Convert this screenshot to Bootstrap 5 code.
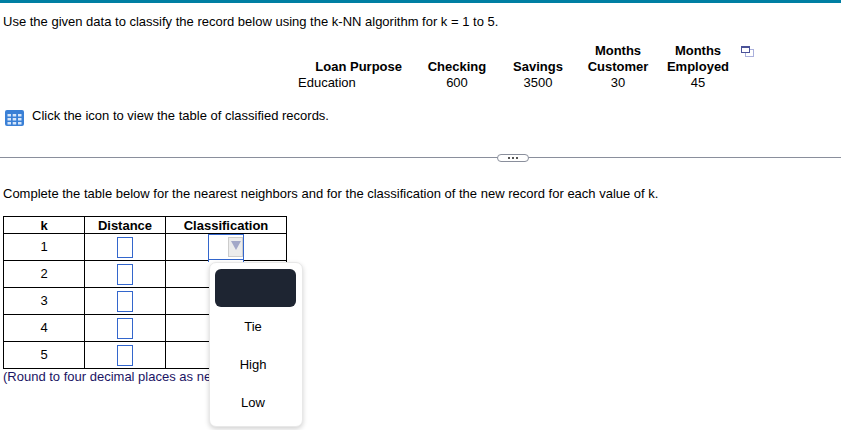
<!DOCTYPE html>
<html lang="en">
<head>
<meta charset="utf-8">
<title>k-NN</title>
<link href="https://cdn.jsdelivr.net/npm/bootstrap@5.3.0/dist/css/bootstrap.min.css" rel="stylesheet">
<style>
html,body{height:430px;overflow:hidden;background:#fff}
body{font-family:"Liberation Sans",Arial,sans-serif;font-size:13px;line-height:16px;color:#000;border-top:3px solid #007fa3}
.qtext{margin:11px 0 0 3px;height:16px}
.datawrap{margin-top:13px;height:48px}
.datarow{display:flex;align-items:flex-end;padding-left:298px}
.dcol{text-align:center;font-weight:400}
.dcol b{display:block;font-weight:700}
.dloan{width:108px;text-align:left}
.dloan b{text-align:right;padding-right:4px}
.dchk{width:80px;margin-left:11px}
.dsav{width:80px;margin-left:1px}
.dcus,.demp{width:80px}
.popicon{margin-left:3px;align-self:flex-start;margin-top:3px}
.clickrow{margin:17px 0 0 5px;display:flex;align-items:flex-start;gap:8px;height:16px}
.clickrow svg{margin-top:2px;flex:none}
.sep{margin-top:33px;height:1px;background:#8a8f9c;position:relative}
.sep-pill{position:absolute;left:497px;top:-3px;width:32px;height:8px;background:#fff;border:1px solid #8a8f9c;border-radius:4px;display:flex;align-items:center;justify-content:center;gap:2px}
.sep-pill i{display:block;width:2px;height:2px;background:#555}
.inst{margin:28px 0 0 3px;height:16px}
.answer{margin:14px 0 0 3px;width:284px;position:relative}
.ktbl{border-collapse:collapse;table-layout:fixed;width:284px}
.ktbl th,.ktbl td{border:1px solid #000;text-align:center;padding:0}
.ktbl th{height:17px;font-weight:700;line-height:15px}
.ktbl td{height:27px}
.numbox{display:block;width:16px;height:21px;border:1px solid #3366cc;margin:0 auto;background:#fff}
.selbox{display:block;width:36px;height:26px;border:1px solid #3366cc;margin-left:42px;position:relative;background:#fff}
.selbtn{position:absolute;right:0;top:2px;width:15px;height:20px;background:#ececec;border:1px solid #ccc;display:flex;align-items:center;justify-content:center}
.selbtn::after{content:"";border-left:5px solid transparent;border-right:5px solid transparent;border-top:9px solid #a3a8c8;margin-top:-3px}
.note{color:#1b1464;height:17px;line-height:15px;white-space:nowrap}
.optmenu{position:absolute;left:206px;top:46px;width:94px;height:165px;background:#fff;border:1px solid #e8e8e8;border-radius:7px;box-shadow:0 2px 5px rgba(0,0,0,.18);padding:6px 6px 0 5px;z-index:5}
.selcap{position:absolute;left:205px;top:43px;width:36px;height:3px;background:#fff;border:1px solid #3366cc;border-bottom:0;z-index:4}
.optitem{height:38px;display:flex;align-items:center;justify-content:center;border-radius:6px;padding:2px 5px 0 0}
.optdark{background:#1e2532}
</style>
</head>
<body>
<p class="qtext">Use the given data to classify the record below using the k-NN algorithm for k = 1 to 5.</p>
<div class="datawrap">
  <div class="datarow">
    <div class="dcol dloan"><b>Loan Purpose</b>Education</div>
    <div class="dcol dchk"><b>Checking</b>600</div>
    <div class="dcol dsav"><b>Savings</b>3500</div>
    <div class="dcol dcus"><b>Months<br>Customer</b>30</div>
    <div class="dcol demp"><b>Months<br>Employed</b>45</div>
    <svg class="popicon" width="13" height="11" viewBox="0 0 13 11"><rect x="4.5" y="3.5" width="8" height="7" fill="#fff" stroke="#aab0dc"/><rect x=".5" y=".5" width="8" height="6" fill="#fff" stroke="#4a5298"/><rect x="0" y="0" width="9" height="2" fill="#4a5298"/></svg>
  </div>
</div>
<div class="clickrow">
  <svg width="19" height="16" viewBox="0 0 19 16"><rect width="19" height="16" rx="2" fill="#3a80d6"/><g fill="#d6e6fa"><rect x="2.5" y="4" width="3.5" height="2.5"/><rect x="7.7" y="4" width="3.5" height="2.5"/><rect x="13" y="4" width="3.5" height="2.5"/><rect x="2.5" y="8" width="3.5" height="2.5"/><rect x="7.7" y="8" width="3.5" height="2.5"/><rect x="13" y="8" width="3.5" height="2.5"/><rect x="2.5" y="12" width="3.5" height="2.5"/><rect x="7.7" y="12" width="3.5" height="2.5"/><rect x="13" y="12" width="3.5" height="2.5"/></g></svg>
  <span>Click the icon to view the table of classified records.</span>
</div>
<div class="sep"><div class="sep-pill"><i></i><i></i><i></i></div></div>
<p class="inst">Complete the table below for the nearest neighbors and for the classification of the new record for each value of k.</p>
<div class="answer">
  <table class="ktbl">
    <colgroup><col style="width:81px"><col style="width:81px"><col style="width:121px"></colgroup>
    <thead><tr><th>k</th><th>Distance</th><th>Classification</th></tr></thead>
    <tbody>
      <tr><td>1</td><td><span class="numbox"></span></td><td><span class="selbox"><span class="selbtn"></span></span></td></tr>
      <tr><td>2</td><td><span class="numbox"></span></td><td></td></tr>
      <tr><td>3</td><td><span class="numbox"></span></td><td></td></tr>
      <tr><td>4</td><td><span class="numbox"></span></td><td></td></tr>
      <tr><td>5</td><td><span class="numbox"></span></td><td></td></tr>
    </tbody>
  </table>
  <div class="note">(Round to four decimal places as needed.)</div>
  <div class="selcap"></div>
  <div class="optmenu">
    <div class="optitem optdark"></div>
    <div class="optitem">Tie</div>
    <div class="optitem">High</div>
    <div class="optitem">Low</div>
  </div>
</div>
<script src="https://cdn.jsdelivr.net/npm/bootstrap@5.3.0/dist/js/bootstrap.bundle.min.js"></script>
</body>
</html>
